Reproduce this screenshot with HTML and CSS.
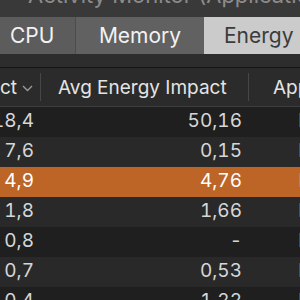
FILE: index.html
```html
<!DOCTYPE html>
<html lang="en">
<head>
  <meta charset="UTF-8">
  <title>Activity Monitor - Energy</title>
  <link rel="stylesheet" href="styles.css">
</head>
<body>
  <div class="window">
    <div class="titlebar"><span class="title">Activity Monitor (Applications in last 12 hours)</span></div>

    <div class="tabs">
      <div class="tab tab-cpu">CPU</div>
      <div class="tab tab-memory">Memory</div>
      <div class="tab tab-energy active">Energy</div>
    </div>

    <div class="gap"></div>

    <div class="table">
      <div class="head">
        <div class="hcell col-impact">
          <span class="clip">Energy Impact</span>
          <svg class="chevron" width="11" height="7" viewBox="0 0 11 7"><polyline points="1,1 5.5,5.5 10,1" fill="none" stroke="#9a9a9a" stroke-width="1.4"/></svg>
        </div>
        <div class="hcell col-avg">Avg Energy Impact</div>
        <div class="hcell col-nap">App Nap</div>
      </div>

      <div class="row dark"><div class="cell num">18,4</div><div class="cell avg">50,16</div><div class="cell nap">No</div></div>
      <div class="row light"><div class="cell num">7,6</div><div class="cell avg">0,15</div><div class="cell nap">No</div></div>
      <div class="row selected"><div class="cell num">4,9</div><div class="cell avg">4,76</div><div class="cell nap">No</div></div>
      <div class="row light"><div class="cell num">1,8</div><div class="cell avg">1,66</div><div class="cell nap">No</div></div>
      <div class="row dark"><div class="cell num">0,8</div><div class="cell avg">-</div><div class="cell nap">No</div></div>
      <div class="row light"><div class="cell num">0,7</div><div class="cell avg">0,53</div><div class="cell nap">No</div></div>
      <div class="row dark"><div class="cell num">0,4</div><div class="cell avg">1,22</div><div class="cell nap">No</div></div>
    </div>
  </div>
</body>
</html>
```

FILE: styles.css
```css
body {
  margin: 0;
  background-color: #1e1e1e;
  font-family: Inter, "Liberation Sans", Arial, sans-serif;
  overflow: hidden;
}
.window {
  width: 300px;
  height: 300px;
  overflow: hidden;
}
.titlebar {
  height: 17px;
  background-color: #393939;
  overflow: hidden;
  white-space: nowrap;
}
.title {
  display: block;
  margin-top: -16px;
  padding-left: 28px;
  font-size: 22px;
  line-height: 22px;
  color: #8c8c8c;
}
.tabs {
  display: flex;
  height: 37px;
  background-color: #5c5c5c;
}
.tab {
  display: flex;
  align-items: center;
  font-size: 21px;
  color: #f2f2f2;
  white-space: nowrap;
}
.tab-cpu {
  width: 76px;
  padding-left: 10px;
  box-sizing: border-box;
  border-right: 1px solid #4d4d4d;
}
.tab-memory {
  width: 128px;
  justify-content: center;
  background-color: #616161;
}
.tab-energy {
  flex: 1;
  padding-left: 20px;
  background-color: #cbcbcb;
  color: #3b3b3b;
}
.gap {
  height: 13px;
  background-color: #2d2d2d;
  border-bottom: 1px solid #161616;
}
.head {
  display: grid;
  grid-template-columns: 41px 208px 1fr;
  height: 38px;
  background-color: #2b2b2b;
  border-bottom: 1px solid #3e3e3e;
}
.hcell {
  display: flex;
  align-items: center;
  font-size: 19px;
  color: #e4e4e4;
  white-space: nowrap;
  overflow: hidden;
  box-sizing: border-box;
}
.col-impact {
  justify-content: flex-end;
  padding-right: 7px;
  border-right: 1px solid #474747;
  margin: 5px 0;
}
.clip {
  flex-shrink: 0;
}
.chevron {
  flex-shrink: 0;
  margin-left: 5px;
  margin-top: 2px;
}
.col-avg {
  padding-left: 17px;
  border-right: 1px solid #474747;
  margin: 5px 0;
}
.col-nap {
  padding-left: 24px;
}
.row {
  display: grid;
  grid-template-columns: 41px 208px 1fr;
  height: 30px;
  font-size: 19px;
  font-variant-numeric: tabular-nums;
  color: #d6d6d6;
}
.row.dark {
  background-color: #1f1f1f;
}
.row.light {
  background-color: #292929;
}
.row.selected {
  background-color: #bd6527;
  color: #ffffff;
}
.cell {
  display: flex;
  align-items: center;
  justify-content: flex-end;
  padding-right: 7px;
  padding-bottom: 3px;
  white-space: nowrap;
  overflow: hidden;
}
.cell.nap {
  justify-content: flex-start;
  padding-left: 49px;
  padding-right: 0;
  color: #9a9a9a;
}
```
